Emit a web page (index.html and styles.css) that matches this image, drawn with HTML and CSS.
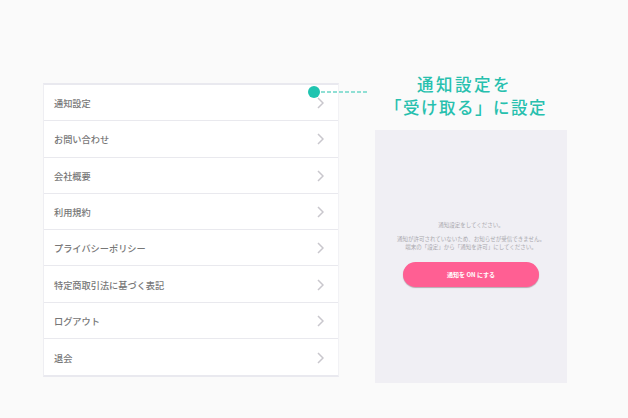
FILE: index.html
```html
<!DOCTYPE html>
<html lang="ja">
<head>
    <meta charset="UTF-8">
    <title>通知設定</title>
    <link rel="stylesheet" href="styles.css">
</head>
<body>

<div class="page">
    <div class="menu">
        <ul>
            <li>通知設定<svg class="arrow" viewBox="0 0 7 12"><path d="M1 1l5 5-5 5"/></svg></li>
            <li>お問い合わせ<svg class="arrow" viewBox="0 0 7 12"><path d="M1 1l5 5-5 5"/></svg></li>
            <li>会社概要<svg class="arrow" viewBox="0 0 7 12"><path d="M1 1l5 5-5 5"/></svg></li>
            <li>利用規約<svg class="arrow" viewBox="0 0 7 12"><path d="M1 1l5 5-5 5"/></svg></li>
            <li>プライバシーポリシー<svg class="arrow" viewBox="0 0 7 12"><path d="M1 1l5 5-5 5"/></svg></li>
            <li>特定商取引法に基づく表記<svg class="arrow" viewBox="0 0 7 12"><path d="M1 1l5 5-5 5"/></svg></li>
            <li>ログアウト<svg class="arrow" viewBox="0 0 7 12"><path d="M1 1l5 5-5 5"/></svg></li>
            <li>退会<svg class="arrow" viewBox="0 0 7 12"><path d="M1 1l5 5-5 5"/></svg></li>
        </ul>
        <span class="dot"></span>
        <span class="dash"></span>
    </div>

    <div class="side">
        <h1 class="title"><span class="title-first">通知設定を</span><br>「受け取る」に設定</h1>
        <div class="panel">
            <p class="lead">通知設定をしてください。</p>
            <p class="note">通知が許可されていないため、お知らせが受信できません。<br>端末の「設定」から「通知を許可」にしてください。</p>
            <div class="btn">通知を ON にする</div>
        </div>
    </div>
</div>

</body>
</html>
```

FILE: styles.css
```css
* {
    margin: 0;
    padding: 0;
    box-sizing: border-box;
}

html, body {
    height: 100%;
    background-color: #fafafa;
}

body {
    font-family: "Noto Sans CJK JP", "Liberation Sans", sans-serif;
}

.page {
    display: flex;
    align-items: flex-start;
    gap: 36px;
    padding: 73px 0 0 43px;
}

/* left menu */
.menu {
    position: relative;
    width: 296px;
    margin-top: 10px;
    background-color: #fff;
    border-top: 2px solid #e9e9ef;
    border-bottom: 2px solid #e9e9ef;
    border-left: 1px solid #eeeef2;
    border-right: 1px solid #f2f2f5;
}

.menu ul {
    list-style: none;
}

.menu li {
    display: flex;
    align-items: center;
    justify-content: space-between;
    height: 36.3px;
    padding: 1px 14px 0 10px;
    border-bottom: 1px solid #e9e9ee;
    font-size: 9.2px;
    font-weight: 500;
    color: #777;
}

.menu li:last-child {
    border-bottom: none;
}

.arrow {
    width: 7px;
    height: 12px;
    fill: none;
    stroke: #c9c7cd;
    stroke-width: 1.5;
}

.dot {
    position: absolute;
    top: 1px;
    right: 18px;
    width: 12px;
    height: 12px;
    border-radius: 50%;
    background-color: #1fc4b0;
}

.dash {
    position: absolute;
    top: 6px;
    left: 277px;
    width: 46px;
    height: 2px;
    background: repeating-linear-gradient(to right, #8fdfd4 0, #8fdfd4 4px, transparent 4px, transparent 6px);
}

/* right side */
.side {
    width: 192px;
}

.title {
    margin-bottom: 11px;
    padding-right: 10px;
    font-size: 16.5px;
    font-weight: 500;
    line-height: 23px;
    letter-spacing: 1.5px;
    text-align: center;
    color: #27c0ae;
}

.title-first {
    padding-right: 3px;
    letter-spacing: 2.5px;
}

.panel {
    display: flex;
    flex-direction: column;
    align-items: center;
    height: 253px;
    padding-top: 90px;
    background-color: #f0eff4;
    color: #a9a8ad;
    text-align: center;
}

.lead {
    font-size: 5.5px;
    line-height: 10px;
}

.note {
    margin-top: 6px;
    font-size: 5.5px;
    line-height: 7.5px;
}

.btn {
    width: 136px;
    height: 25px;
    margin-top: 11px;
    border-radius: 13px;
    background-color: #ff5f93;
    box-shadow: 0 1px 1px #b9a9b2;
    font-size: 6px;
    font-weight: 700;
    line-height: 25px;
    color: #fff;
}
```
